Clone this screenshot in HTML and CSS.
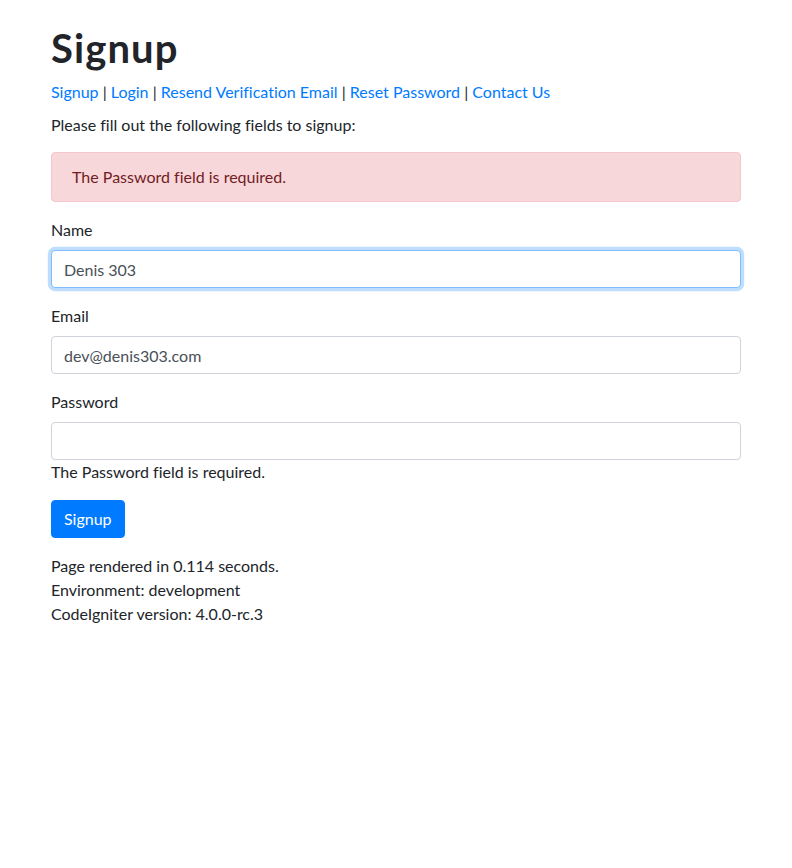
FILE: index.html
```html
<!DOCTYPE html>
<html lang="en">
<head>
<meta charset="utf-8">
<title>Signup</title>
<link rel="stylesheet" href="styles.css">
</head>
<body>
<div class="container">
  <h1 class="title">Signup</h1>
  <div class="nav">
    <a href="#">Signup</a> | <a href="#">Login</a> | <a href="#">Resend Verification Email</a> | <a href="#">Reset Password</a> | <a href="#">Contact Us</a>
  </div>
  <p class="intro">Please fill out the following fields to signup:</p>
  <div class="alert">The Password field is required.</div>
  <form class="form">
    <div class="form-group">
      <label class="label" for="name">Name</label>
      <input class="input input-focus" id="name" type="text" value="Denis 303">
    </div>
    <div class="form-group">
      <label class="label" for="email">Email</label>
      <input class="input" id="email" type="text" value="dev@denis303.com">
    </div>
    <div class="form-group">
      <label class="label" for="password">Password</label>
      <input class="input" id="password" type="password" value="">
      <div class="field-error">The Password field is required.</div>
    </div>
    <button class="btn" type="button">Signup</button>
  </form>
  <div class="footer">
    <div>Page rendered in 0.114 seconds.</div>
    <div>Environment: development</div>
    <div>CodeIgniter version: 4.0.0-rc.3</div>
  </div>
</div>
</body>
</html>
```
FILE: styles.css
```css
* { box-sizing: border-box; }
html, body { margin: 0; padding: 0; }
body {
  font-family: "Lato", "Liberation Sans", sans-serif;
  font-size: 16px;
  line-height: 1.5;
  color: #212529;
  background: #fff;
  font-variant-ligatures: none;
}
.container {
  max-width: 720px;
  margin: 24px auto 0;
  padding: 0 15px;
}
.title {
  font-size: 40px;
  font-weight: 700;
  line-height: 1.2;
  letter-spacing: 1.1px;
  margin: 0 0 8px;
}
.nav { margin: 0; }
.nav a { color: #007bff; text-decoration: none; }
.intro { margin: 9px 0 15px; }
.alert {
  padding: 12px 20px;
  margin-bottom: 16px;
  border: 1px solid #f5c6cb;
  border-radius: 4px;
  background: #f8d7da;
  color: #721c24;
}
.form { margin: 0; }
.form-group { margin-bottom: 16px; }
.label { display: inline-block; margin-bottom: 8px; }
.input {
  display: block;
  width: 100%;
  height: 38px;
  padding: 6px 12px;
  font-family: inherit;
  font-size: 16px;
  line-height: 1.5;
  color: #495057;
  background: #fff;
  border: 1px solid #ced4da;
  border-radius: 4px;
  outline: none;
  font-variant-ligatures: none;
}
.input-focus {
  border-color: #80bdff;
  box-shadow: 0 0 0 3.2px rgba(0, 123, 255, .25);
}
.field-error { line-height: 24px; }
.btn {
  display: inline-block;
  height: 38px;
  padding: 6px 12px;
  font-family: inherit;
  font-size: 16px;
  line-height: 1.5;
  color: #fff;
  background: #007bff;
  border: 1px solid #007bff;
  border-radius: 4px;
  cursor: pointer;
}
.footer { margin-top: 16px; }
```
